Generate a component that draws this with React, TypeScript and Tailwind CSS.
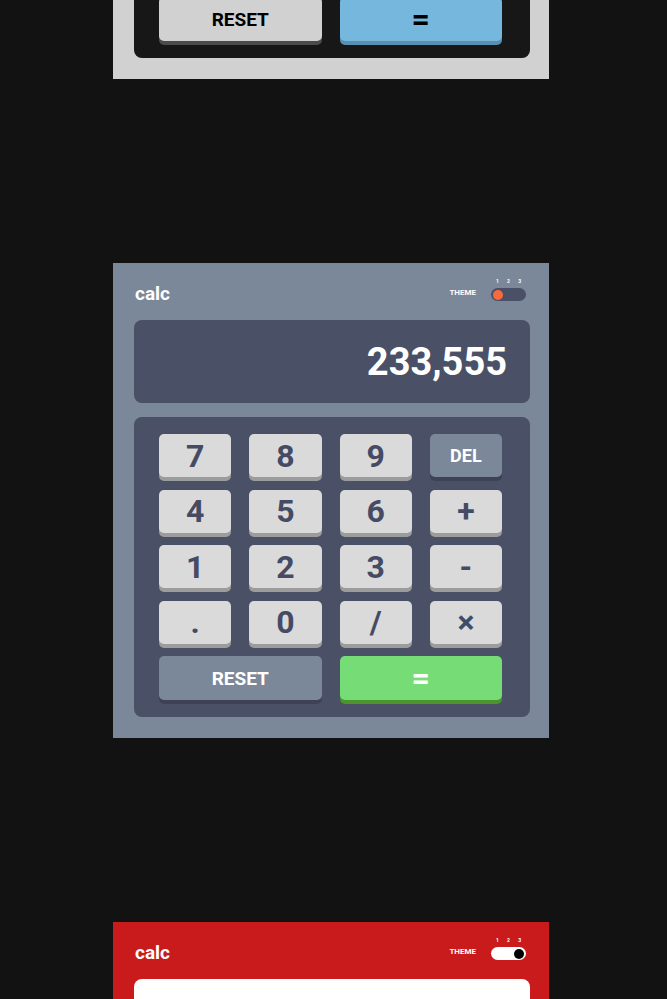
type Theme = {
	card: string
	text: string
	toggle: string
	knob: string
	knobPos: string
	display: string
	displayText: string
	pad: string
	key: string
	del: string
	reset: string
	equals: string
}

const themes: Theme[] = [
	{
		card: "bg-[#d1d1d1]",
		text: "text-black",
		toggle: "bg-[#171717]",
		knob: "bg-[#d1d1d1]",
		knobPos: "justify-center",
		display: "bg-[#ffffff]",
		displayText: "text-black",
		pad: "bg-[#171717]",
		key: "bg-[#d1d1d1] shadow-[0_4px_0_#4b4b4b] text-black",
		del: "bg-[#d1d1d1] shadow-[0_4px_0_#4b4b4b] text-black",
		reset: "bg-[#d1d1d1] shadow-[0_4px_0_#4b4b4b] text-black",
		equals: "bg-[#76b7de] shadow-[0_4px_0_#5a8fb2] text-black",
	},
	{
		card: "bg-[#7b8899]",
		text: "text-white",
		toggle: "bg-[#4a5066]",
		knob: "bg-[#f56b3e]",
		knobPos: "justify-start",
		display: "bg-[#4a5066]",
		displayText: "text-white",
		pad: "bg-[#4a5066]",
		key: "bg-[#dadada] shadow-[0_4px_0_#9c9c9c] text-[#454b64]",
		del: "bg-[#7b8899] shadow-[0_4px_0_#3e4257] text-white",
		reset: "bg-[#7b8899] shadow-[0_4px_0_#3e4257] text-white",
		equals: "bg-[#76dc76] shadow-[0_4px_0_#4c952c] text-white",
	},
	{
		card: "bg-[#c91b1b]",
		text: "text-white",
		toggle: "bg-white",
		knob: "bg-black",
		knobPos: "justify-end",
		display: "bg-white",
		displayText: "text-black",
		pad: "bg-white",
		key: "bg-[#c91b1b] shadow-[0_4px_0_#7a1010] text-white",
		del: "bg-black shadow-[0_4px_0_#444] text-white",
		reset: "bg-black shadow-[0_4px_0_#444] text-white",
		equals: "bg-[#1c1c1c] shadow-[0_4px_0_#555] text-white",
	},
]

const keys = ["7", "8", "9", "DEL", "4", "5", "6", "+", "1", "2", "3", "-", ".", "0", "/", "×"]

const Calculator = ({ t }: { t: Theme }) => {
	return (
		<div className={`ml-[113px] w-[436px] h-[475px] pt-[17px] pl-[21px] pr-[19px] ${t.card}`}>
			{/* header */}
			<div className="flex h-[26px] items-center justify-between">
				<span className={`ml-[1px] text-[19px] font-bold leading-none ${t.text}`}>calc</span>
				<div className="mr-[4px] flex items-center gap-[15px]">
					<span className={`text-[8px] font-bold leading-none ${t.text}`}>THEME</span>
					<div className="relative mt-[3px]">
						<div className={`absolute -top-[9px] left-0 flex w-full justify-between px-[5px] text-[5px] font-bold leading-none ${t.text}`}>
							<span>1</span>
							<span>2</span>
							<span>3</span>
						</div>
						<div className={`flex h-[13px] w-[35px] items-center rounded-full px-[2px] ${t.toggle} ${t.knobPos}`}>
							<div className={`h-[10px] w-[10px] rounded-full ${t.knob}`} />
						</div>
					</div>
				</div>
			</div>

			{/* display */}
			<div className={`mt-[14px] flex h-[83px] w-[396px] items-center justify-end rounded-[8px] pr-[23px] ${t.display}`}>
				<span className={`text-[38px] font-bold leading-none ${t.displayText}`}>233,555</span>
			</div>

			{/* keypad */}
			<div className={`mt-[14px] h-[300px] w-[396px] rounded-[8px] pt-[17px] pl-[25px] pr-[28px] ${t.pad}`}>
				<div className="grid grid-cols-4 gap-x-[18px] gap-y-[12.5px]">
					{keys.map((k) => (
						<button
							key={k}
							className={`flex h-[43px] items-center justify-center rounded-[5px] font-bold leading-none ${
								k === "DEL" ? `text-[18px] ${t.del}` : `text-[32px] ${t.key}`
							}`}
						>
							{k}
						</button>
					))}
					<button className={`col-span-2 flex h-[44px] items-center justify-center rounded-[5px] text-[19px] font-bold leading-none ${t.reset}`}>
						RESET
					</button>
					<button className={`col-span-2 flex h-[44px] items-center justify-center rounded-[5px] text-[32px] font-bold leading-none ${t.equals}`}>
						=
					</button>
				</div>
			</div>
		</div>
	)
}

export default function App() {
	return (
		<div className="h-[999px] w-[667px] overflow-hidden bg-[#121212] font-['Roboto',sans-serif]">
			<div className="-mt-[396px] flex flex-col gap-[184px]">
				{themes.map((t, i) => (
					<Calculator t={t} key={i} />
				))}
			</div>
		</div>
	)
}
